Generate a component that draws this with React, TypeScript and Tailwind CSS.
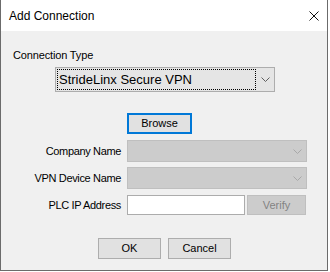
import React from "react";

function Chevron({ color }: { color: string }) {
  return (
    <svg width="9" height="5" viewBox="0 0 9 5" className="block">
      <polyline points="0.5,0.5 4.5,4.5 8.5,0.5" fill="none" stroke={color} strokeWidth="1" />
    </svg>
  );
}

function DisabledCombo() {
  return (
    <div className="w-[180px] h-[22px] border border-[#bfbfbf] bg-[#cccccc] flex items-center justify-end pr-[4px]">
      <Chevron color="#a8a8a8" />
    </div>
  );
}

function Row({ label, children, className }: { label: string; children: React.ReactNode; className?: string }) {
  return (
    <div className={"flex items-center " + (className ?? "")}>
      <div className="w-[120px] text-right tracking-[-0.35px]">{label}</div>
      <div className="ml-[6px] flex">{children}</div>
    </div>
  );
}

export default function App() {
  return (
    <div className="w-[330px] h-[272px] bg-white font-['Liberation_Sans',Arial,sans-serif] text-black">
      <div className="w-[328px] h-[271px] flex flex-col border-x border-b border-[#6b6b6b] bg-[#f0f0f0]">
        <div className="h-[31px] shrink-0 bg-white flex items-center justify-between pl-2 pr-[8px]">
          <span className="text-[12px] leading-[14px]">Add Connection</span>
          <svg width="10" height="10" viewBox="0 0 10 10" className="block">
            <path d="M0.5 0.5 L9.5 9.5 M9.5 0.5 L0.5 9.5" stroke="#111" strokeWidth="1" />
          </svg>
        </div>

        <div className="flex flex-col text-[11px] leading-[13px]">
          <div className="ml-3 mt-[18px] tracking-[-0.15px]">Connection Type</div>

          <div className="ml-[54px] mt-[5px] w-[220px] h-[25px] border border-[#adadad] bg-[#e5e5e5] flex items-center p-[1px]">
            <div className="flex-1 h-[21px] border border-dotted border-black flex items-center pl-[1px] text-[13px]">
              StrideLinx Secure VPN
            </div>
            <div className="w-[17px] flex justify-end pr-[3px]">
              <Chevron color="#5f5f5f" />
            </div>
          </div>

          <button className="ml-[126px] mt-[21px] w-[65px] h-[21px] border-2 border-[#0078d7] bg-[#e1e1e1] flex items-center justify-center">
            Browse
          </button>

          <Row label="Company Name" className="mt-[6px]">
            <DisabledCombo />
          </Row>
          <Row label="VPN Device Name" className="mt-[5px]">
            <DisabledCombo />
          </Row>
          <Row label="PLC IP Address" className="mt-[6px]">
            <div className="w-[118px] h-[20px] border border-[#acacac] bg-white" />
            <div className="ml-[2px] w-[59px] h-[20px] border border-[#bfbfbf] bg-[#cccccc] text-[#838383] flex items-center justify-center">
              Verify
            </div>
          </Row>

          <div className="ml-[97px] mt-[23px] flex gap-[7px]">
            <button className="w-[63px] h-[21px] border border-[#adadad] bg-[#e1e1e1] flex items-center justify-center">
              OK
            </button>
            <button className="w-[63px] h-[21px] border border-[#adadad] bg-[#e1e1e1] flex items-center justify-center">
              Cancel
            </button>
          </div>
        </div>
      </div>
    </div>
  );
}
